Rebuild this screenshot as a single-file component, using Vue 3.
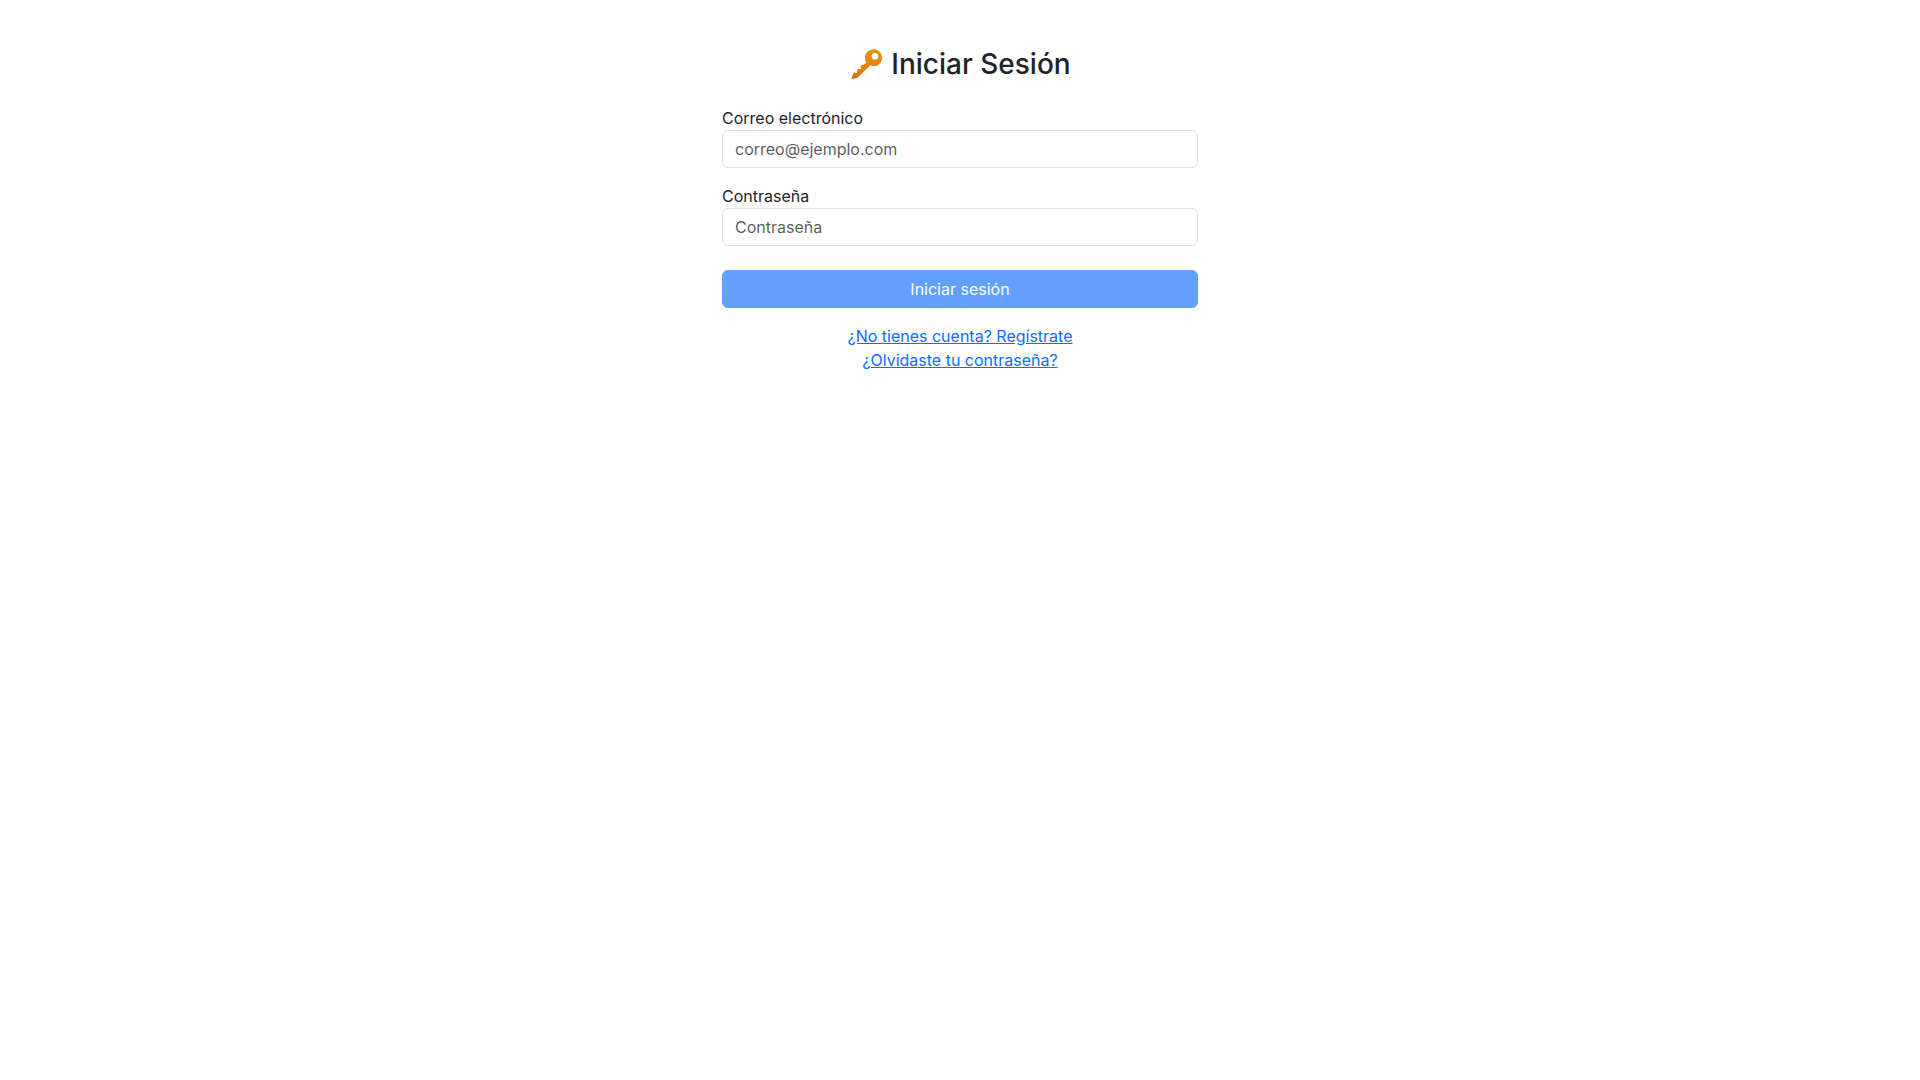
<script setup>
import { ref } from 'vue'

const email = ref('')
const password = ref('')
</script>

<template>
  <main class="login">
    <h2 class="title">
      <svg class="key" viewBox="-6 -3 102 102" aria-hidden="true">
        <defs>
          <linearGradient id="key-fill" x1="0" y1="0" x2="0" y2="1">
            <stop offset="0" stop-color="#e8930c" />
            <stop offset="1" stop-color="#e2720f" />
          </linearGradient>
        </defs>
        <path
          fill="url(#key-fill)"
          fill-rule="evenodd"
          d="M68 1C82 1 93 12 93 26C93 40 82 51 68 51C64 51 61 50 58 49L19 86Q13 89 2 90Q1 89 2 86L7 73Q9 70 12 71L17 72L19 70L19 62Q20 59 23 60L29 61L30 59L29 52Q30 47 35 47L38 48L46 40C43 35 42 30 42 26C42 12 53 1 68 1ZM72 12A10 10 0 1 0 72 32A10 10 0 1 0 72 12Z"
        />
        <path d="M8 84L49 44" fill="none" stroke="#c9650c" stroke-width="2" opacity="0.4" />
      </svg>
      <span>Iniciar Sesión</span>
    </h2>
    <form @submit.prevent>
      <div class="field">
        <label for="email">Correo electrónico</label>
        <input id="email" v-model="email" type="email" placeholder="correo@ejemplo.com" />
      </div>
      <div class="field">
        <label for="password">Contraseña</label>
        <input id="password" v-model="password" type="password" placeholder="Contraseña" />
      </div>
      <button class="submit" type="submit" disabled>Iniciar sesión</button>
    </form>
    <nav class="links">
      <a href="#registro">¿No tienes cuenta? Regístrate</a>
      <a href="#recuperar">¿Olvidaste tu contraseña?</a>
    </nav>
  </main>
</template>

<style>
body {
  margin: 0;
  background: #fff;
}
</style>

<style scoped>
.login,
.login * {
  box-sizing: border-box;
}

.login {
  max-width: 500px;
  margin: 48px auto 0;
  padding: 0 12px;
  font-family: Inter, "Noto Sans", sans-serif;
  font-size: 16px;
  line-height: 24px;
  color: #212529;
}

.title {
  display: flex;
  justify-content: center;
  align-items: flex-start;
  gap: 8px;
  margin: 0 0 24px;
  font-size: 28px;
  font-weight: 500;
  line-height: 32px;
}

.key {
  width: 34px;
  height: 34px;
}

.field {
  margin-bottom: 16px;
}

label {
  display: block;
}

input {
  display: block;
  width: 100%;
  padding: 6px 12px;
  border: 1px solid #dee2e6;
  border-radius: 6px;
  background: #fff;
  font: inherit;
  color: inherit;
}

input::placeholder {
  color: rgba(33, 37, 41, 0.75);
  opacity: 1;
}

.submit {
  display: block;
  width: 100%;
  margin-top: 24px;
  padding: 6px 12px;
  border: 1px solid #0d6efd;
  border-radius: 6px;
  background: #0d6efd;
  font: inherit;
  color: #fff;
  opacity: 0.65;
}

.links {
  display: flex;
  flex-direction: column;
  align-items: center;
  margin-top: 16px;
}

.links a {
  color: #0d6efd;
  text-decoration: underline;
}
</style>
